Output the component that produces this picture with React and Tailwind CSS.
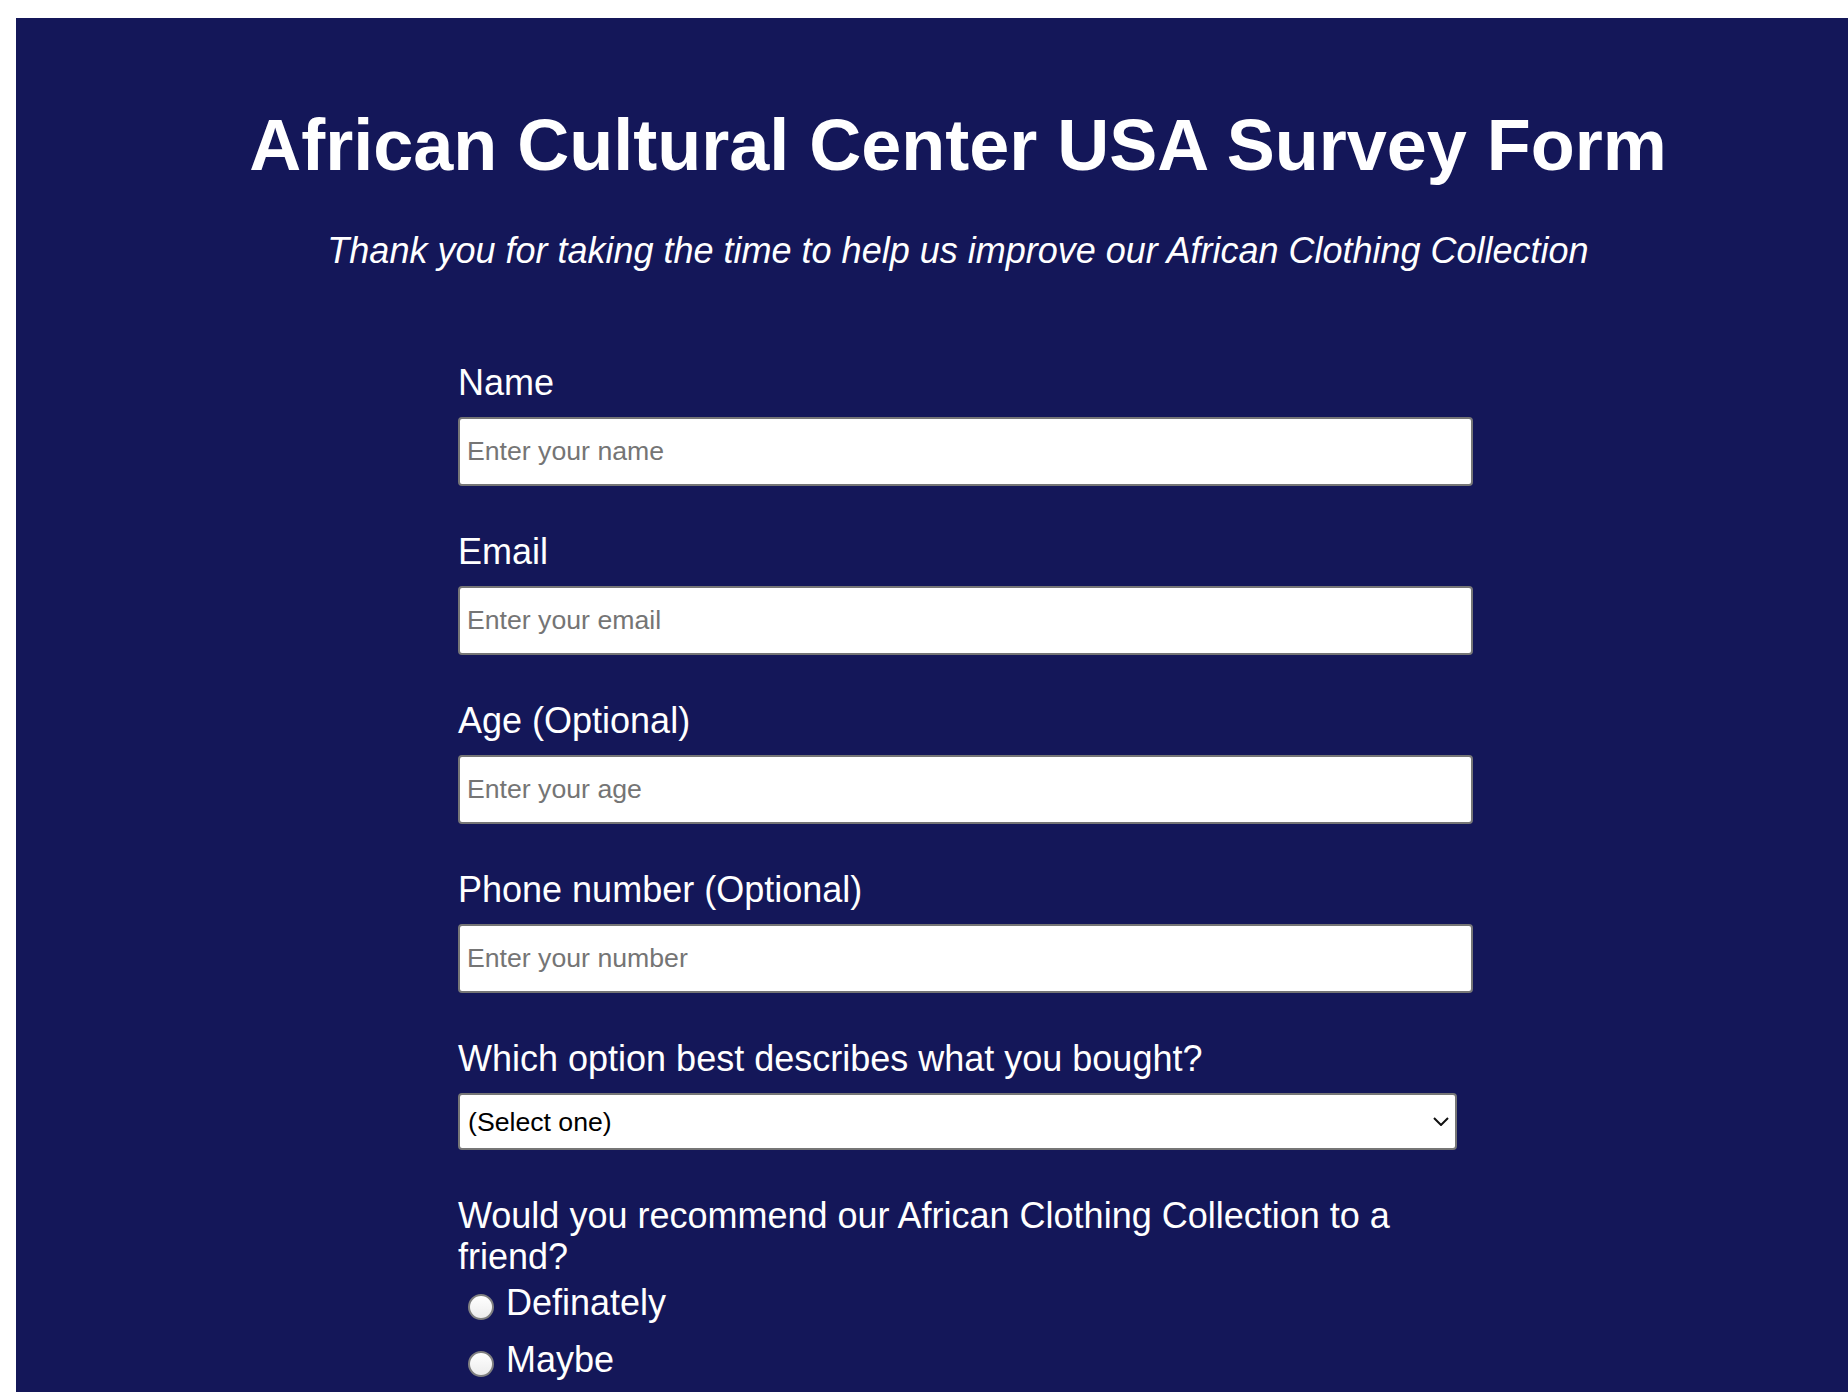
import React from "react";

const fields = [
  { id: "name", label: "Name", type: "text", placeholder: "Enter your name" },
  { id: "email", label: "Email", type: "email", placeholder: "Enter your email" },
  { id: "age", label: "Age (Optional)", type: "number", placeholder: "Enter your age" },
  { id: "number", label: "Phone number (Optional)", type: "tel", placeholder: "Enter your number" },
];

const recommend = ["Definately", "Maybe", "Not sure"];

function Field({ id, label, type, placeholder }) {
  return (
    <div className="mb-[45px]">
      <label htmlFor={id} className="block text-[36px] leading-[41px]">
        {label}
      </label>
      <input
        id={id}
        type={type}
        placeholder={placeholder}
        className="mt-[14px] block w-full h-[69px] border-2 border-[#767676] rounded-[4px] bg-white px-[7px] text-[26.67px] text-black placeholder:text-[#757575] outline-none"
      />
    </div>
  );
}

export default function App() {
  return (
    <div className="min-h-screen bg-white pt-[18px] pl-4 font-['Liberation_Sans',Arial,sans-serif] overflow-hidden">
      <div className="bg-[#141759] min-h-[1374px] text-white pb-20">
        {/* Header */}
        <header className="pl-[52px] pt-[86px] text-center">
          <h1 className="text-[72px] leading-[83px] font-bold">
            African Cultural Center USA Survey Form
          </h1>
          <p className="mt-[43px] text-[36px] leading-[41px] italic">
            Thank you for taking the time to help us improve our African Clothing Collection
          </p>
        </header>

        {/* Form */}
        <form className="ml-[442px] mt-[91px] w-[1015px]">
          {fields.map((f) => (
            <Field key={f.id} {...f} />
          ))}

          <div className="mb-[45px]">
            <label htmlFor="dropdown" className="block text-[36px] leading-[41px]">
              Which option best describes what you bought?
            </label>
            <div className="relative mt-[14px] w-[999px]">
              <select
                id="dropdown"
                className="block w-full h-[57px] appearance-none border-2 border-[#767676] rounded-[4px] bg-white pl-[8px] text-[26.67px] text-black outline-none"
                defaultValue=""
              >
                <option value="" disabled>
                  (Select one)
                </option>
                <option>Dashiki</option>
                <option>Kente cloth</option>
                <option>Ankara dress</option>
              </select>
              <svg
                className="absolute right-[8px] top-[24px] pointer-events-none"
                width="16"
                height="9"
                viewBox="0 0 16 9"
                fill="none"
              >
                <path d="M1 1l7 7 7-7" stroke="#111" strokeWidth="2" />
              </svg>
            </div>
          </div>

          <div>
            <p className="text-[36px] leading-[41px]">
              Would you recommend our African Clothing Collection to a friend?
            </p>
            <div className="mt-[5px] flex flex-col gap-[16px]">
              {recommend.map((r) => (
                <label key={r} className="flex items-start text-[36px] leading-[41px]">
                  <input
                    type="radio"
                    name="recommend"
                    value={r}
                    className="appearance-none ml-[10px] mt-[12px] w-[26px] h-[26px] rounded-full border-2 border-[#808080] bg-gradient-to-b from-white to-[#ececec] shrink-0"
                  />
                  <span className="ml-[12px]">{r}</span>
                </label>
              ))}
            </div>
          </div>
        </form>
      </div>
    </div>
  );
}
